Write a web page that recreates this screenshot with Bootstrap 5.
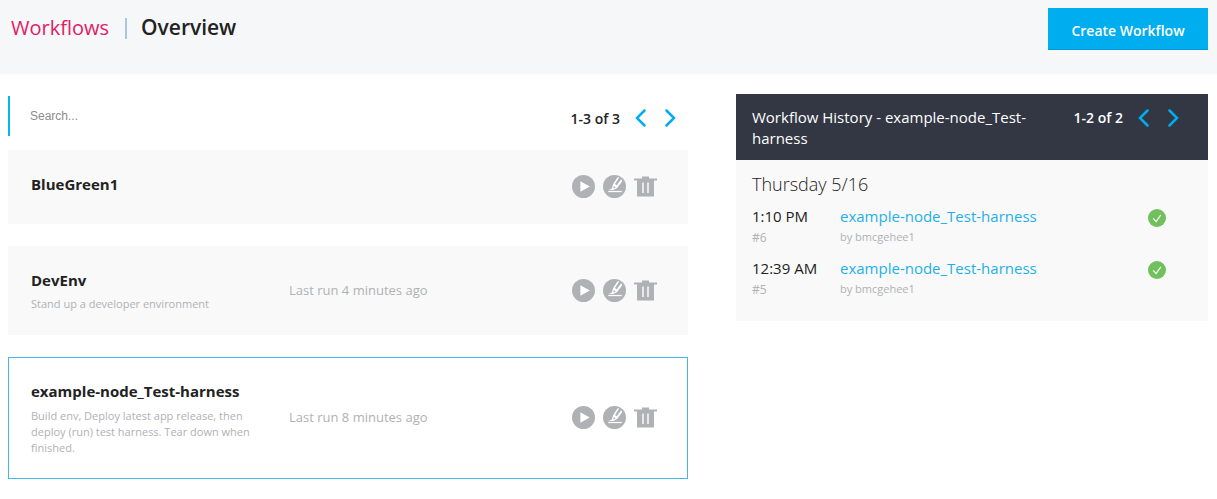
<!DOCTYPE html>
<html lang="en">
<head>
<meta charset="utf-8">
<meta name="viewport" content="width=device-width, initial-scale=1">
<title>Workflows | Overview</title>
<link rel="stylesheet" href="https://cdn.jsdelivr.net/npm/bootstrap@5.3.0/dist/css/bootstrap.min.css">
<style>
  body { font-family: "Open Sans", "Noto Sans", sans-serif; font-size: 15px; line-height: 21px; color: #222; background: #fff; }
  a { text-decoration: none; }
  .page-head { background: #f5f7f9; min-height: 74px; padding: 8px 9px 24px 11px; }
  .crumbs { font-size: 20px; line-height: 40px; }
  .crumbs a { color: #e31b64; }
  .crumb-rule { width: 2px; height: 21px; background: #adc4dd; margin: 0 14px 0 16px; }
  .crumb-now { font-size: 21px; line-height: 38px; padding-bottom: 2px; font-weight: 600; }
  .btn-create { width: 160px; height: 42px; padding: 4px 0 0; border: 0; border-bottom: 1px solid #0095d6; border-radius: 0; background: #00aeef; color: #fff; font-size: 14px; font-weight: 600; font-variant-ligatures: none; }
  .btn-create:hover { background: #009fdb; color: #fff; }
  .page-body { padding: 20px 9px 20px 8px; }
  .page-body > .row { --bs-gutter-x: 48px; }
  .search-row { height: 40px; margin: 2px 0 14px; padding-right: 12px; }
  .search-row input { height: 40px; border: 0; border-left: 2px solid #00b9f2; border-radius: 0; padding: 0 20px; font: 12px/20px "Liberation Sans", Arial, sans-serif; color: #555; }
  .search-row input::placeholder { color: #8c8c8c; }
  .pager { padding-top: 4px; }
  .history-head .pager { padding-top: 0; }
  .pager-count { font-size: 14px; font-weight: 600; }
  .pager-btns { gap: 17px; margin-left: 15px; }
  .pager-btn { display: flex; border: 0; padding: 0; background: none; color: #00aeef; }
  .flow-card { border: 1px solid #f9f9f9; background: #f9f9f9; min-height: 74px; padding: 21px 30px 22px 22px; margin-bottom: 22px; }
  .flow-card.chosen { background: #fff; border-color: #45b9e5; }
  .flow-main { width: 228px; }
  .flow-main h2 { font-size: 15px; line-height: 24px; font-weight: 700; margin: 0; }
  .flow-main p { font-size: 11px; line-height: 16px; margin: 0; padding-top: 4px; color: #b0b1b5; }
  .chosen .flow-main p { padding-top: 5px; }
  .flow-last { font-size: 13px; color: #b0b1b5; margin-left: 30px; }
  .flow-tools button { display: flex; border: 0; padding: 0; background: none; color: #b0b1b5; }
  .history-head { background: #323743; color: #fff; padding: 13px 29px 11px 16px; }
  .history-head h2 { font-size: 15px; line-height: 21px; font-weight: 400; margin: 0; width: 300px; }
  .history-body { background: #f9f9f9; padding: 12px 42px 11px 16px; }
  .history-body h3 { font-size: 18px; line-height: 24px; font-weight: 300; margin: 0 0 10px; }
  .run { padding-bottom: 8px; min-height: 52px; }
  .run-time { width: 88px; }
  .run a { color: #1fb0ea; }
  .run-note { color: #b0b1b5; font-size: 11px; line-height: 20px; }
  .run-time .run-note { font-size: 12px; line-height: 22px; }
  .run svg { margin-top: 3px; }
</style>
</head>
<body>
<svg class="d-none" xmlns="http://www.w3.org/2000/svg">
  <symbol id="i-prev" viewBox="0 0 12 18"><path d="M9.500 1.500 2 9l7.500 7.500" fill="none" stroke="currentColor" stroke-width="2.500" stroke-linecap="round"/></symbol>
  <symbol id="i-next" viewBox="0 0 12 18"><path d="M2.500 1.500 10 9l-7.500 7.500" fill="none" stroke="currentColor" stroke-width="2.500" stroke-linecap="round"/></symbol>
  <symbol id="i-play" viewBox="0 0 22 22"><circle cx="11" cy="11" r="11" fill="currentColor"/><path d="M8 6v10l9-5z" fill="#fff"/></symbol>
  <symbol id="i-edit" viewBox="0 0 22 22"><circle cx="11" cy="11" r="11" fill="currentColor"/><path d="M5 15.800h13" stroke="#fff" stroke-width="1.200"/><path d="M9.500 9 13.300 3.200Q14.300 1.800 15.500 2.500L11.500 8.500 13.200 9.800 17.300 4Q18.800 5 18 6.500L13.500 12.500 9.800 14.300H5.500L8.500 13z" fill="#fff"/><path d="M10.200 10.500 12.200 12 10 13z" fill="currentColor"/></symbol>
  <symbol id="i-bin" viewBox="0 0 23 22"><path d="M0 3h8V1h7v2h8v2h-3v16H3V5H0z" fill="currentColor"/><path d="M9 7v10.500M14 7v10.500" stroke="#fff" stroke-width="1.400"/></symbol>
  <symbol id="i-ok" viewBox="0 0 18 18"><circle cx="9" cy="9" r="9" fill="#70c05b"/><path d="m5.200 9.300 2.900 3.300 4.700-6.800" fill="none" stroke="#fff" stroke-width="1.200"/></symbol>
</svg>

<header class="page-head d-flex justify-content-between align-items-start">
  <nav class="crumbs d-flex align-items-center" aria-label="Breadcrumb">
    <a href="#">Workflows</a><span class="crumb-rule"></span><h1 class="crumb-now m-0">Overview</h1>
  </nav>
  <button type="button" class="btn btn-create">Create Workflow</button>
</header>

<main class="container-fluid page-body">
  <div class="row">
    <section class="col-7">
      <div class="search-row d-flex align-items-center">
        <input type="text" class="flex-grow-1" placeholder="Search..." aria-label="Search workflows">
        <div class="pager d-flex align-items-center">
          <span class="pager-count">1-3 of 3</span>
          <div class="pager-btns d-flex">
            <button type="button" class="pager-btn" aria-label="Previous"><svg width="12" height="18"><use href="#i-prev"/></svg></button>
            <button type="button" class="pager-btn" aria-label="Next"><svg width="12" height="18"><use href="#i-next"/></svg></button>
          </div>
        </div>
      </div>

      <article class="flow-card d-flex align-items-center">
        <div class="flow-main align-self-start"><h2>BlueGreen1</h2></div>
        <div class="flow-tools d-flex ms-auto">
          <button type="button" aria-label="Run"><svg width="23" height="23"><use href="#i-play"/></svg></button>
          <button type="button" class="mx-2" aria-label="Edit"><svg width="23" height="23"><use href="#i-edit"/></svg></button>
          <button type="button" aria-label="Delete"><svg width="23" height="23"><use href="#i-bin"/></svg></button>
        </div>
      </article>

      <article class="flow-card d-flex align-items-center">
        <div class="flow-main align-self-start"><h2>DevEnv</h2><p>Stand up a developer environment</p></div>
        <span class="flow-last">Last run 4 minutes ago</span>
        <div class="flow-tools d-flex ms-auto">
          <button type="button" aria-label="Run"><svg width="23" height="23"><use href="#i-play"/></svg></button>
          <button type="button" class="mx-2" aria-label="Edit"><svg width="23" height="23"><use href="#i-edit"/></svg></button>
          <button type="button" aria-label="Delete"><svg width="23" height="23"><use href="#i-bin"/></svg></button>
        </div>
      </article>

      <article class="flow-card chosen d-flex align-items-center mb-0">
        <div class="flow-main align-self-start"><h2>example-node_Test-harness</h2><p>Build env, Deploy latest app release, then deploy (run) test harness. Tear down when finished.</p></div>
        <span class="flow-last">Last run 8 minutes ago</span>
        <div class="flow-tools d-flex ms-auto">
          <button type="button" aria-label="Run"><svg width="23" height="23"><use href="#i-play"/></svg></button>
          <button type="button" class="mx-2" aria-label="Edit"><svg width="23" height="23"><use href="#i-edit"/></svg></button>
          <button type="button" aria-label="Delete"><svg width="23" height="23"><use href="#i-bin"/></svg></button>
        </div>
      </article>
    </section>

    <section class="col-5">
      <div class="history-head d-flex justify-content-between align-items-start">
        <h2>Workflow History - example-node_Test-harness</h2>
        <div class="pager d-flex align-items-center">
          <span class="pager-count">1-2 of 2</span>
          <div class="pager-btns d-flex">
            <button type="button" class="pager-btn" aria-label="Previous"><svg width="12" height="18"><use href="#i-prev"/></svg></button>
            <button type="button" class="pager-btn" aria-label="Next"><svg width="12" height="18"><use href="#i-next"/></svg></button>
          </div>
        </div>
      </div>
      <div class="history-body">
        <h3>Thursday 5/16</h3>
        <div class="run d-flex">
          <div class="run-time">1:10 PM<div class="run-note">#6</div></div>
          <div><a href="#">example-node_Test-harness</a><div class="run-note">by bmcgehee1</div></div>
          <svg class="ms-auto" width="18" height="18" role="img" aria-label="Succeeded"><use href="#i-ok"/></svg>
        </div>
        <div class="run d-flex">
          <div class="run-time">12:39 AM<div class="run-note">#5</div></div>
          <div><a href="#">example-node_Test-harness</a><div class="run-note">by bmcgehee1</div></div>
          <svg class="ms-auto" width="18" height="18" role="img" aria-label="Succeeded"><use href="#i-ok"/></svg>
        </div>
      </div>
    </section>
  </div>
</main>
<script src="https://cdn.jsdelivr.net/npm/bootstrap@5.3.0/dist/js/bootstrap.bundle.min.js"></script>
</body>
</html>
